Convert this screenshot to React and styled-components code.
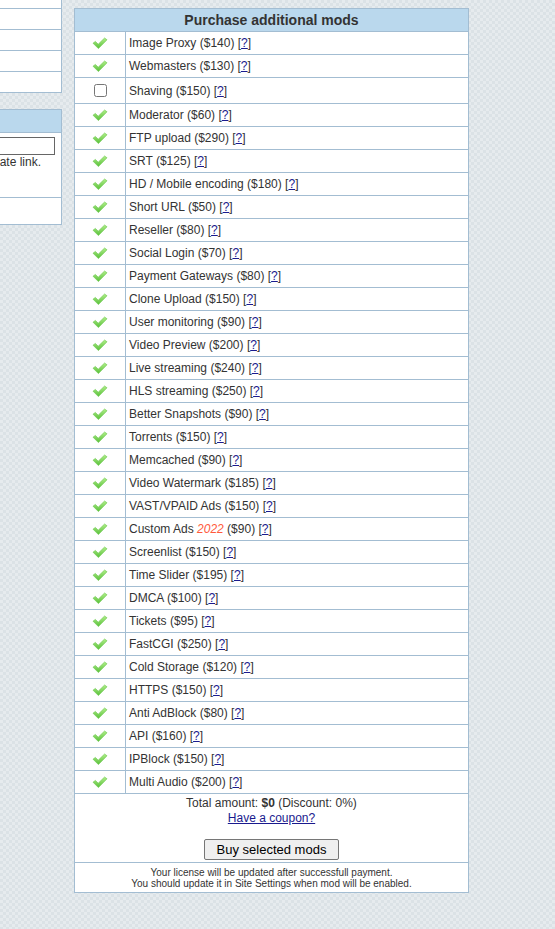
import React from 'react'
import styled, {createGlobalStyle} from 'styled-components'

const MODS = [
    {name: 'Image Proxy', price: 140, checked: true},
    {name: 'Webmasters', price: 130, checked: true},
    {name: 'Shaving', price: 150, checked: false},
    {name: 'Moderator', price: 60, checked: true},
    {name: 'FTP upload', price: 290, checked: true},
    {name: 'SRT', price: 125, checked: true},
    {name: 'HD / Mobile encoding', price: 180, checked: true},
    {name: 'Short URL', price: 50, checked: true},
    {name: 'Reseller', price: 80, checked: true},
    {name: 'Social Login', price: 70, checked: true},
    {name: 'Payment Gateways', price: 80, checked: true},
    {name: 'Clone Upload', price: 150, checked: true},
    {name: 'User monitoring', price: 90, checked: true},
    {name: 'Video Preview', price: 200, checked: true},
    {name: 'Live streaming', price: 240, checked: true},
    {name: 'HLS streaming', price: 250, checked: true},
    {name: 'Better Snapshots', price: 90, checked: true},
    {name: 'Torrents', price: 150, checked: true},
    {name: 'Memcached', price: 90, checked: true},
    {name: 'Video Watermark', price: 185, checked: true},
    {name: 'VAST/VPAID Ads', price: 150, checked: true},
    {name: 'Custom Ads', price: 90, checked: true, tag: '2022'},
    {name: 'Screenlist', price: 150, checked: true},
    {name: 'Time Slider', price: 195, checked: true},
    {name: 'DMCA', price: 100, checked: true},
    {name: 'Tickets', price: 95, checked: true},
    {name: 'FastCGI', price: 250, checked: true},
    {name: 'Cold Storage', price: 120, checked: true},
    {name: 'HTTPS', price: 150, checked: true},
    {name: 'Anti AdBlock', price: 80, checked: true},
    {name: 'API', price: 160, checked: true},
    {name: 'IPBlock', price: 150, checked: true},
    {name: 'Multi Audio', price: 200, checked: true},
]

// rows of the panel above, only their right end is on screen
const SIDE_ROWS = [1, 2, 3, 4, 5]

function CheckIcon() {
    return (
        <svg width="16" height="13" viewBox="0 0 16 13">
            <defs>
                <linearGradient id="chk" x1="0" y1="0" x2="0" y2="1">
                    <stop offset="0" stopColor="#b0ee88" />
                    <stop offset="1" stopColor="#58c03a" />
                </linearGradient>
            </defs>
            <path
                d="M1 6.2 L3.4 4.4 L6.2 7.2 L12.6 1 L15 2.8 L6.4 11.6 Z"
                fill="url(#chk)"
                stroke="#66c646"
                strokeWidth="0.6"
                strokeLinejoin="round"
            />
        </svg>
    )
}

export default function App() {
    return (
        <>
            <GlobalStyle />
            <Page>
                <Sidebar>
                    <SidePanel>
                        {SIDE_ROWS.map(r => <SideRow key={r} />)}
                    </SidePanel>
                    <SidePanel>
                        <SideHeader />
                        <SideBody>
                            <LinkInput readOnly value="" />
                            <Hint>Use this code to generate link.</Hint>
                        </SideBody>
                        <SideFoot />
                    </SidePanel>
                </Sidebar>

                <ModsTable>
                    <thead>
                        <tr>
                            <HeaderCell colSpan={2}>Purchase additional mods</HeaderCell>
                        </tr>
                    </thead>
                    <tbody>
                        {MODS.map(m => (
                            <ModRow key={m.name} tall={!m.checked}>
                                <IconCell>
                                    {m.checked ? <CheckIcon /> : <Box type="checkbox" />}
                                </IconCell>
                                <NameCell>
                                    {m.name}{' '}
                                    {m.tag && <><Tag>{m.tag}</Tag>{' '}</>}
                                    (${m.price}) [<Help href="#">?</Help>]
                                </NameCell>
                            </ModRow>
                        ))}
                        <tr>
                            <TotalCell colSpan={2}>
                                <div>Total amount: <b>$0</b> (Discount: 0%)</div>
                                <Coupon href="#">Have a coupon?</Coupon>
                                <BuyButton type="button">Buy selected mods</BuyButton>
                            </TotalCell>
                        </tr>
                        <tr>
                            <NoteCell colSpan={2}>
                                Your license will be updated after successfull payment.<br />
                                You should update it in Site Settings when mod will be enabled.
                            </NoteCell>
                        </tr>
                    </tbody>
                </ModsTable>
            </Page>
        </>
    )
}

const GlobalStyle = createGlobalStyle`
    html, body {
        margin: 0;
        min-height: 100%;
    }
    body {
        font-family: "Liberation Sans", Arial, sans-serif;
        font-size: 12px;
        color: #333;
        background-color: #e4e9ec;
        background-image: conic-gradient(#dbe2e6 25%, #e6ebee 0 50%, #dbe2e6 0 75%, #e6ebee 0);
        background-size: 6px 6px;
        height: 929px;
        overflow: hidden;
    }
`
const Page = styled.div`
    display: flex;
    align-items: flex-start;
    gap: 12px;
    padding-top: 8px;
`
const Sidebar = styled.div`
    width: 200px;
    flex: none;
    margin-left: -138px;
    margin-top: -21px;
    display: flex;
    flex-direction: column;
    gap: 16px;
`
const SidePanel = styled.div`
    background: #fff;
    border: 1px solid #a3bdd2;
    border-bottom: none;
`
const SideRow = styled.div`
    height: 20px;
    border-bottom: 1px solid #a3bdd2;
`
const SideHeader = styled.div`
    height: 22px;
    background: #bad8ed;
    border-bottom: 1px solid #a3bdd2;
`
const SideBody = styled.div`
    height: 65px;
    padding: 4px 6px 0 0;
    box-sizing: border-box;
    border-bottom: 1px solid #a3bdd2;
`
const LinkInput = styled.input`
    display: block;
    width: 100%;
    height: 18px;
    box-sizing: border-box;
    border: 1px solid #666;
    border-radius: 0;
    padding: 0 3px;
    margin: 0;
`
const Hint = styled.div`
    text-align: right;
    padding-right: 14px;
    font-size: 12px;
    line-height: 14px;
`
const SideFoot = styled.div`
    height: 26px;
    border-bottom: 1px solid #a3bdd2;
`
const ModsTable = styled.table`
    width: 395px;
    flex: none;
    border-collapse: collapse;
    background: #fff;
    border: 1px solid #a3bdd2;
`
const HeaderCell = styled.th`
    height: 22px;
    padding: 0;
    background: #bad8ed;
    border: 1px solid #a3bdd2;
    font-size: 14px;
    font-weight: bold;
    color: #333;
    text-align: center;
`
const ModRow = styled.tr`
    height: ${props => props.tall ? '26px' : '23px'};
`
const IconCell = styled.td`
    width: 50px;
    padding: 0;
    border: 1px solid #a3bdd2;
    text-align: center;
    vertical-align: middle;

    svg {
        display: block;
        margin: 0 auto;
    }
`
const Box = styled.input`
    display: block;
    margin: 0 auto;
    width: 13px;
    height: 13px;
`
const NameCell = styled.td`
    padding: 0 0 0 3px;
    border: 1px solid #a3bdd2;
    font-size: 12px;
    white-space: nowrap;
`
const Tag = styled.i`
    color: #ff5a3c;
`
const Help = styled.a`
    color: #1a1a8e;
    text-decoration: underline;
`
const TotalCell = styled.td`
    height: 69px;
    padding: 2px 0 0;
    box-sizing: border-box;
    border: 1px solid #a3bdd2;
    text-align: center;
    vertical-align: top;
    font-size: 12px;
    line-height: 15px;
`
const Coupon = styled.a`
    color: #1a1a8e;
    text-decoration: underline;
    display: inline-block;
`
const BuyButton = styled.button`
    display: block;
    margin: 13px auto 0;
    height: 21px;
    padding: 0 12px;
    font-family: "Liberation Sans", Arial, sans-serif;
    font-size: 13px;
    color: #000;
    background: #efefef;
    border: 1px solid #767676;
    border-radius: 2px;
`
const NoteCell = styled.td`
    height: 29px;
    padding: 0;
    border: 1px solid #a3bdd2;
    text-align: center;
    font-size: 10px;
    line-height: 11px;
    color: #333;
`
